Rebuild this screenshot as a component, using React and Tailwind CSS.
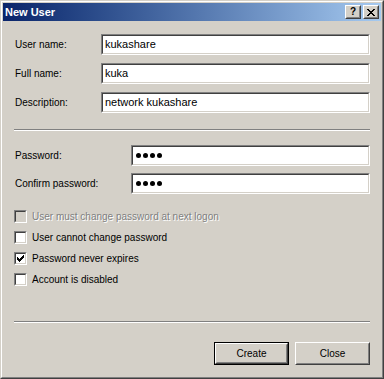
import React from "react";

const font = { fontFamily: '"Liberation Sans", Arial, sans-serif' };

function Sunken({ children, className = "" }) {
  return (
    <div className={"border border-t-[#808080] border-l-[#808080] border-r-white border-b-white " + className}>
      <div className="h-full border border-t-[#404040] border-l-[#404040] border-r-[#d4d0c8] border-b-[#d4d0c8] bg-white flex items-center pl-[2px]">
        {children}
      </div>
    </div>
  );
}

function Raised({ children, className = "", inner = "" }) {
  return (
    <div className={"border border-t-white border-l-white border-r-[#404040] border-b-[#404040] bg-[#d4d0c8] " + className}>
      <div className={"h-full border border-t-[#d4d0c8] border-l-[#d4d0c8] border-r-[#808080] border-b-[#808080] flex items-center justify-center " + inner}>
        {children}
      </div>
    </div>
  );
}

function Check({ checked, disabled, label }) {
  return (
    <div className="flex items-center h-[13px] gap-[5px]">
      <div className="w-[13px] h-[13px] border border-t-[#808080] border-l-[#808080] border-r-white border-b-white">
        <div className={"w-full h-full border border-t-[#404040] border-l-[#404040] border-r-[#d4d0c8] border-b-[#d4d0c8] flex items-center justify-center " + (disabled ? "bg-[#d4d0c8]" : "bg-white")}>
          {checked && (
            <svg width="7" height="7" viewBox="0 0 7 7" shapeRendering="crispEdges">
              <path d="M0 2h1v3h-1zM1 3h1v3h-1zM2 4h1v3h-1zM3 3h1v3h-1zM4 2h1v3h-1zM5 1h1v3h-1zM6 0h1v3h-1z" fill="#000" />
            </svg>
          )}
        </div>
      </div>
      <span
        className={"text-[10px] leading-none " + (disabled ? "text-[#808080] [text-shadow:1px_1px_0_#fff]" : "text-black")}
      >
        {label}
      </span>
    </div>
  );
}

function Sep() {
  return (
    <div className="flex flex-col">
      <div className="h-px bg-[#808080]" />
      <div className="h-px bg-white" />
    </div>
  );
}

function Dots() {
  return (
    <span className="flex gap-[2px] pl-[1px]">
      {[0, 1, 2, 3].map((i) => (
        <span key={i} className="w-[5px] h-[5px] rounded-full bg-black" />
      ))}
    </span>
  );
}

export default function App() {
  return (
    <div style={font} className="w-[384px] h-[379px] bg-[#d4d0c8] border border-t-[#d4d0c8] border-l-[#d4d0c8] border-r-[#404040] border-b-[#404040]">
      <div className="h-full border border-t-white border-l-white border-r-[#808080] border-b-[#808080] p-px flex flex-col">
        {/* Title bar */}
        <div className="h-[18px] flex items-center justify-between bg-gradient-to-r from-[#0a246a] to-[#a6caf0] pl-[2px] pr-[2px]">
          <span className="text-white font-bold text-[11px] leading-none">New User</span>
          <div className="flex gap-[2px]">
            <Raised className="w-[16px] h-[14px]">
              <span className="text-[10px] font-bold leading-none text-black">?</span>
            </Raised>
            <Raised className="w-[16px] h-[14px]">
              <svg width="8" height="7" viewBox="0 0 8 7" shapeRendering="crispEdges">
                <path d="M0 0h2v1h-2zM6 0h2v1h-2zM1 1h2v1h-2zM5 1h2v1h-2zM2 2h4v1h-4zM3 3h2v1h-2zM2 4h4v1h-4zM1 5h2v1h-2zM5 5h2v1h-2zM0 6h2v1h-2zM6 6h2v1h-2z" fill="#000" />
              </svg>
            </Raised>
          </div>
        </div>

        {/* Content */}
        <div className="flex-1 flex flex-col pl-[11px] pr-[11px] text-black">
          <div className="flex flex-col gap-[8px] mt-[13px]">
            {[
              ["User name:", "kukashare"],
              ["Full name:", "kuka"],
              ["Description:", "network kukashare"],
            ].map(([l, v]) => (
              <div key={l} className="flex items-center h-[21px]">
                <span className="w-[87px] pl-px text-[10px] leading-none">{l}</span>
                <Sunken className="flex-1 h-[21px]">
                  <span className="text-[11px] leading-none">{v}</span>
                </Sunken>
              </div>
            ))}
          </div>

          <div className="mt-[16px]">
            <Sep />
          </div>

          <div className="flex flex-col gap-[7px] mt-[14px]">
            {["Password:", "Confirm password:"].map((l) => (
              <div key={l} className="flex items-center h-[21px]">
                <span className="w-[117px] pl-px text-[10px] leading-none">{l}</span>
                <Sunken className="flex-1 h-[21px]">
                  <Dots />
                </Sunken>
              </div>
            ))}
          </div>

          <div className="flex flex-col gap-[8px] mt-[16px]">
            <Check disabled label="User must change password at next logon" />
            <Check label="User cannot change password" />
            <Check checked label="Password never expires" />
            <Check label="Account is disabled" />
          </div>

          <div className="mt-[35px]">
            <Sep />
          </div>

          <div className="flex justify-end gap-[6px] mt-[19px]">
            <div className="border border-black">
              <Raised className="w-[73px] h-[21px]">
                <span className="text-[10px] leading-none">Create</span>
              </Raised>
            </div>
            <Raised className="w-[75px] h-[23px]">
              <span className="text-[10px] leading-none">Close</span>
            </Raised>
          </div>
        </div>
      </div>
    </div>
  );
}
